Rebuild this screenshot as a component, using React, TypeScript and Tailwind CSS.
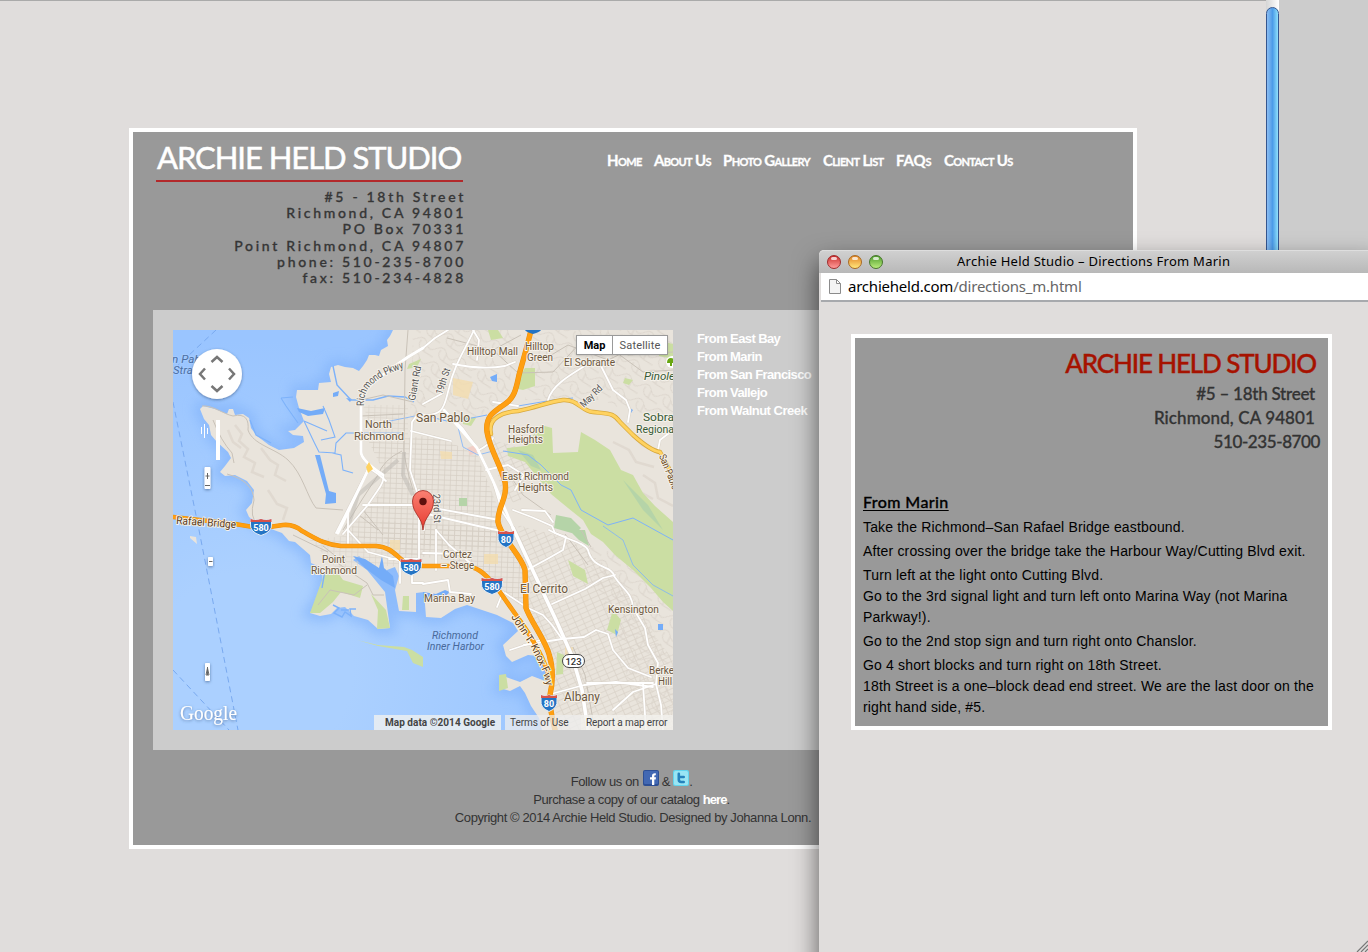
import React from "react";

type LabelProps = {
  x: number;
  y: number;
  w: number;
  children: string;
  size?: number;
  fill?: string;
  italic?: boolean;
  rotate?: number;
  halo?: string;
};

/* Map caption with a light halo, stretched to a fixed width. */
function Label({ x, y, w, children, size = 11, fill = "#6b5740", italic, rotate = 0, halo = "#f5f1ea" }: LabelProps) {
  return (
    <text
      x={x}
      y={y}
      textLength={w}
      lengthAdjust="spacingAndGlyphs"
      fontSize={size}
      fill={fill}
      stroke={halo}
      strokeWidth={2}
      strokeLinejoin="round"
      paintOrder="stroke"
      fontStyle={italic ? "italic" : "normal"}
      transform={`rotate(${rotate} ${x} ${y})`}
    >
      {children}
    </text>
  );
}

function Shield({ x, y, n }: { x: number; y: number; n: string }) {
  const w = n.length > 2 ? 10.5 : 8;
  return (
    <g transform={`translate(${x} ${y})`}>
      <path
        d={`M${-w} -8 Q${-w / 2} -6 0 -8 Q${w / 2} -6 ${w} -8 V-3 Q${w + 1} 5 0 8.5 Q${-w - 1} 5 ${-w} -3Z`}
        fill="#2474c4"
        stroke="#e6edf5"
        strokeWidth="1"
      />
      <path d={`M${-w} -8 Q${-w / 2} -6 0 -8 Q${w / 2} -6 ${w} -8 V-5 H${-w}Z`} fill="#d9534a" />
      <text y="3.5" textAnchor="middle" fontSize="9" fontWeight="700" fill="#fff">
        {n}
      </text>
    </g>
  );
}

const LAND =
  "M220 0 L217 6 L214 10 L215 16 L208 20 L206 26 L202 25 L196 25 L194 30 L190 36 L186 41 L180 38 L172 37 L165 35 L158 37 L156 44 L158 52 L146 53 L145 60 L124 60 L123 67 L126 78 L131 91 L122 100 L115 101 L120 105 L130 106 L131 112 L121 118 L106 120 L96 115 L84 106 L78 98 L76 88 L70 84 L62 85 L60 79 L56 79 L54 84 L42 79 L30 76 L27 79 L31 89 L36 95 L38 105 L44 112 L55 122 L58 128 L52 136 L47 142 L52 146 L62 145 L74 151 L81 160 L79 173 L73 180 L76 187 L90 196 L109 203 L116 211 L122 212 L137 225 L138 233 L149 238 L150 255 L146 270 L137 283 L147 286 L158 284 L164 278 L172 277 L181 286 L195 290 L205 299 L217 298 L212 262 L194 240 L180 230 L186 226 L202 240 L213 248 L214 240 L222 237 L226 246 L222 260 L226 281 L243 282 L243 263 L251 262 L253 287 L268 288 L282 279 L294 275 L306 279 L324 285 L340 293 L345 301 L330 315 L333 326 L339 332 L355 325 L366 326 L373 342 L375 352 L359 346 L347 352 L333 347 L327 358 L337 361 L347 356 L352 363 L358 376 L366 388 L369 400 L500 400 L500 0 Z";

const I80 =
  "M358 0 C354 18 350 30 346 45 C343 60 341 68 332 74 C320 82 312 87 314 102 C317 120 327 133 332 152 C335 168 324 178 325 192 C328 208 349 226 352 240 L353 278 C357 290 372 310 376 324 C381 340 380 352 377 365 Q376 376 382 400";
const I580 =
  "M0 187 L62 194 L86 198 Q98 197 110 195 Q121 194 129 201 C142 208 152 215 168 216 H203 C218 217 222 225 234 234 L250 236 L290 236 C304 236 311 243 322 255 L343 285 C354 300 371 326 377 350";
const SR123 = "M340 198 L361 243 L383 290 L399 326 L409 360 L415 400";
const DAM_RD =
  "M318 104 C314 88 330 82 345 81 C365 77 375 72 390 70 C405 69 408 81 420 82 C438 84 440 83 447 92 L460 105 Q478 121 487 122 L500 146";

const WHITE_ROADS = [
  "M250 18 L235 27 Q189 58 188 68 V122 Q188 130 210 145 Q212 150 205 160 L194 176 L170 204",
  "M213 151 L205 144 L196 138 L163 203",
  "M301 0 C292 20 281 35 276 58 C271 76 272 88 245 84 L239 92 L237 140 L245 165 L251 200",
  "M271 80 L290 99 L304 118 L320 151 L329 181 L340 198",
  "M238 101 L278 111",
  "M246 160 V240",
  "M190 175 H245 L326 190",
  "M250 18 L262 8 L275 0",
  "M250 74 L270 63",
  "M280 34 Q310 40 332 36 L342 32",
  "M300 0 L306 10 L304 30",
  "M415 34 C397 45 379 55 375 70",
  "M428 36 L440 60 L453 70 L457 80 L455 92",
  "M500 100 L487 110 L485 120",
  "M250 183 L305 196 L328 201",
  "M320 72 L345 76 M306 120 Q316 115 320 108",
  "M340 180 Q360 187 379 196 L382 203 L393 207 L390 220 L376 228 L354 240",
  "M379 274 L412 259 L430 248 L442 245",
  "M376 200 C394 210 411 212 415 220 C420 240 439 235 441 246 C450 260 459 262 460 278 L472 298 L475 315 L485 333 L483 354",
  "M351 315 L389 309 L411 307 L423 300 L435 304 L440 320 L455 338 L478 347",
  "M250 223 L292 224",
  "M263 200 L276 215 L302 237",
  "M216 229 H245 M263 200 V240 M227 230 V253 M239 230 V253 H250",
  "M332 263 L355 278 L370 285 L379 295 L389 309",
  "M414 353 H480 M378 364 L411 355 L443 352 L480 357",
  "M483 354 L488 375 L490 400 M483 354 L460 362 L440 380 M470 354 L473 400",
  "M313 140 L335 135 L351 145 L342 160 M349 180 L372 181 L380 192",
  "M175 200 L195 222 L228 231 M175 180 V216",
  "M250 254 L275 250 L277 262 L298 264",
  "M324 277 L330 262 M337 320 L367 310",
];

const GREY_ROADS = [
  "M235 0 L232 40 L231 120 Q231 130 240 160",
  "M229 121 Q210 130 205 145 L190 168 L170 200",
  "M188 70 L210 65 L240 72 M188 86 L230 84",
  "M29 76 C40 75 50 84 60 86 C73 83 76 90 75 100 C80 115 102 118 115 130 C130 144 134 167 143 178 L170 180",
  "M40 90 Q48 111 59 123 L61 133 M54 144 Q80 151 81 170 Q76 188 85 194",
  "M120 205 L155 222 M150 216 L170 232",
  "M160 230 L194 253 L200 265 H211",
  "M145 275 L157 260 L181 265 L194 255",
  "M190 180 L210 205 M186 185 L205 200",
  "M274 8 L320 20 L348 5 M320 20 L345 43 L380 42 L410 10",
  "M430 10 L455 25 L500 22 M440 20 L470 42 L500 40",
  "M370 30 L395 15 L435 30 L460 18",
  "M408 200 L418 217 M392 204 L415 235",
  "M400 317 L412 345 L420 390",
  "M340 150 L350 165 L378 185",
];

function DirectionsMap() {
  return (
    <div className="relative h-[400px] w-[500px] overflow-hidden bg-[#a9cfff]">
      <svg
        width="500"
        height="400"
        viewBox="0 0 500 400"
        className="block font-['Roboto',sans-serif]"
        fill="none"
      >
        <defs>
          <radialGradient id="bay" gradientUnits="userSpaceOnUse" cx="80" cy="340" r="330">
            <stop offset="0.3" stopColor="#abd0ff" />
            <stop offset="1" stopColor="#9ac5ff" />
          </radialGradient>
          <pattern id="blocks" width="6" height="5" patternUnits="userSpaceOnUse" patternTransform="rotate(2)">
            <path d="M0 .5H6M.5 0V5" stroke="#d6cfc4" strokeWidth=".7" />
          </pattern>
          <pattern id="slant" width="8" height="5" patternUnits="userSpaceOnUse" patternTransform="rotate(-24)">
            <path d="M0 .5H8M.5 0V5" stroke="#d8d1c7" strokeWidth=".7" />
          </pattern>
          <pattern id="curvy" width="22" height="16" patternUnits="userSpaceOnUse" patternTransform="rotate(28)">
            <path d="M0 4Q6 -2 11 5T22 4M4 4Q2 12 11 13T22 14M11 5V13" stroke="#d8d1c8" strokeWidth=".8" />
          </pattern>
          <linearGradient id="pin" x1="0" y1="0" x2="0" y2="1">
            <stop offset="0" stopColor="#fb8072" />
            <stop offset="1" stopColor="#e63c30" />
          </linearGradient>
          <filter id="soft" x="-20%" y="-20%" width="140%" height="140%">
            <feGaussianBlur stdDeviation="6" />
          </filter>
          <filter id="drop" x="-30%" y="-30%" width="160%" height="160%">
            <feDropShadow dx="0" dy="1" stdDeviation="1.4" floodColor="#2b4a72" floodOpacity=".6" />
          </filter>
        </defs>

        <rect width="500" height="400" fill="url(#bay)" />
        <path d={LAND} fill="#82b3fa" stroke="#82b3fa" strokeWidth="12" filter="url(#soft)" opacity=".65" />
        <path d={LAND} fill="#e9e4dc" />
        <path d="M17 206l6 1 1 7-7-6zM10 82l6-3z" fill="#e9e4dc" />

        {/* built-up areas */}
        <path d="M196 112 L232 108 L262 105 L304 125 L330 190 L322 215 L300 220 L208 212 L172 205 L205 165 L212 145Z" fill="url(#blocks)" />
        <path d="M190 75 L235 75 V105 H200Z" fill="url(#blocks)" opacity=".7" />
        <path d="M206 190 L330 200 L350 240 L352 280 L318 250 L290 232 L215 222Z" fill="url(#blocks)" />
        <path d="M240 0 H342 L336 65 L310 84 L290 92 L268 60 L237 95Z" fill="url(#curvy)" />
        <path d="M360 0 H500 V85 L455 82 L430 70 L352 70Z" fill="url(#curvy)" />
        <path d="M345 195 L382 205 L412 218 L440 245 L462 270 L478 300 L500 330 V400 H384 L380 330 L356 285Z" fill="url(#slant)" />
        <path d="M410 215 L450 225 L500 270 V400 H470 L440 300Z" fill="url(#curvy)" />
        <path d="M320 110 L370 125 L345 175 L328 165Z" fill="url(#slant)" />
        <path d="M137 210 L180 205 L250 210 V236 L195 236 L165 240Z" fill="url(#blocks)" opacity=".7" />

        {/* hills */}
        <g stroke="#ddd6cd" strokeWidth="2.500" opacity=".8">
          <path d="M62 95l7 9-3 7 9 8-4 8 11 6-3 9 12 5M55 100l5 12 8 6M88 118l9 12 8 5-3 10 11 6M95 160l9 14 10 4-4 12" />
          <path d="M420 120l14 10 8 12 14 5 6 12 18 10M440 112l16 8 7 12 18 5M470 145l12 8 3 15 15 8M455 100l14 15 20 10" />
        </g>

        {/* parks */}
        <g fill="#cbdea3">
          <path d="M334 118 L352 116 L368 95 L379 98 L380 123 L405 122 L408 102 L422 110 L437 120 L448 140 L460 145 L470 163 L482 176 L500 192 V281 L490 272 L478 258 L460 240 L442 225 L430 212 L418 204 L410 190 L395 178 L378 164 L365 148 L352 132 L335 126Z" />
          <path d="M153 239 L163 240 L170 250 L190 256 L187 268 L168 262 L160 272 L147 283 L137 283Z" />
          <path d="M198 264 L213 280 L217 298 L204 299 L205 280ZM230 266h6v14h-7z" />
          <path d="M184 310 L205 315 L231 317 L239 320 L250 327 V337 L240 333 L234 321 L205 316Z" />
          <path d="M326 345 L333 344 L335 358 L326 361Z" />
          <path d="M352 38h10v18l-12 4-10-2z M236 34l12-5-4 8-10 2z" />
          <path d="M384 322 L391 325 L390 344 L383 345ZM395 230 L412 240 L415 254 L400 246ZM440 280 L448 290 L444 305 L434 300Z" />
          <path d="M315 0 L325 0 L330 8 L318 10ZM289 86l14 2-5 8-8-2zM484 10l16 4v15l-14-3zM452 48l8 2-4 5-6-2z" />
        </g>
        <g fill="#b5d4a8">
          <path d="M383 185 L398 188 L408 198 L402 204 L381 198ZM396 200 L412 200 L416 216 L406 210Z" />
          <path d="M345 120 L360 125 L368 140 L358 136ZM450 150 L475 175 L490 200 L470 180ZM286 168h8v8h-8z" />
        </g>
        <g fill="#f2dcae" opacity=".8">
          <path d="M280 48l20 4-5 17-15-4zM267 121l12 1v7h-11zM311 224h14v10h-14zM217 210h10v10h-10zM392 317h8v8h-8z" />
        </g>
        <path d="M294 118l8-3 2 8-7 2z" fill="#f1cfc7" />

        {/* inland water */}
        <g fill="#74acf8">
          <path d="M142 125 L147 125 L156 161 L163 163 V173 L152 174 L153 164Z" />
          <path d="M160 63l6-2-1 5-5 1zM173 68l6 1-2 3zM317 47l7-3v8l-5-1zM485 294l5 0v6h-5zM457 78l3 2-2 3zM442 299l3 3-2 5z" />
          <path d="M124 78 L138 81 L152 78 L150 84 L135 86 L126 82ZM180 226 L192 229 L206 238 L209 226 L211 238 L220 246 L222 258 L208 250 L192 238Z" />
          <path d="M250 262 L263 264 L272 260 L277 262 L268 270 L250 268Z" />
        </g>
        <g stroke="#7db2fa" strokeWidth="1.4">
          <path d="M160 36 L164 55 L178 70 L200 70 L215 66 L232 67 L241 72" />
          <path d="M131 91 L141 112 L146 122 L162 123 L163 113 L173 103 L188 103M131 91 L154 101M150 76 L156 90 L162 107 L148 110 M159 123 L168 125 L170 140 L180 143M108 68l12-1m-12 1l5 8 12 17M77 90l6 15 15 8" strokeWidth="1.1" />
          <path d="M160 275l6 3-5 5 8 4 3-5 6 4-1-7 6 0M152 240 L149 258M168 280h8" />
          <path d="M245 84 L278 92 L314 85M330 121 L355 125 L368 135 L388 155 L398 160 L408 180 L435 195 L460 188 L500 210M345 76 L380 70 L400 68" strokeWidth="1" />
          <path d="M430 196 L450 210 L460 235 L480 255 L500 266M285 97l5 20 15 8 15-4M190 103h40M197 95l45-9" strokeWidth=".8" />
        </g>

        {/* streets */}
        <g stroke="#c9c2b8" strokeWidth="1" strokeLinejoin="round">
          {GREY_ROADS.map((d) => (
            <path key={d} d={d} />
          ))}
        </g>
        <path d="M225 130 L185 165 L174 200 M231 122 L230 145 L240 165" stroke="#bbb7b1" strokeWidth="4" opacity=".5" />
        <g strokeLinejoin="round" strokeLinecap="round">
          <g stroke="#dad3ca" strokeWidth="2.8">
            {WHITE_ROADS.map((d) => (
              <path key={d} d={d} />
            ))}
            <path d={SR123} strokeWidth="5" />
          </g>
          <g stroke="#fff" strokeWidth="1.8">
            {WHITE_ROADS.map((d) => (
              <path key={d} d={d} />
            ))}
            <path d={SR123} strokeWidth="3.6" />
            <path d="M250 18 L235 27 Q189 58 188 68 V122 Q188 130 210 145M196 138 L165 203M271 80 L304 118 L320 151 L340 198" strokeWidth="2.8" />
          </g>
          <path d={DAM_RD} stroke="#d8a83b" strokeWidth="4.4" />
          <path d={DAM_RD} stroke="#ffd25f" strokeWidth="3" />
          <path d={I580} stroke="#e98f0c" strokeWidth="4.6" />
          <path d={I580} stroke="#ff9f12" strokeWidth="3.6" />
          <path d={I80} stroke="#e98f0c" strokeWidth="5.4" />
          <path d={I80} stroke="#ff9f12" strokeWidth="4.4" />
        </g>
        <path d="M196 132l4 7-5 4-2-6z" fill="#ffd25f" />

        {/* ferry lines */}
        <path d="M43 0 L0 40M0 72 L26 200 L65 400M0 340 L56 400" stroke="#79a9ef" strokeWidth="1" strokeDasharray="6 4" />

        {/* captions */}
        <Label x={-1} y={33} w={38} italic fill="#4c6fa3" halo="#a4cbff">n Pablo</Label>
        <Label x={0} y={44} w={26} italic fill="#4c6fa3" halo="#a4cbff">Strait</Label>
        <Label x={294} y={25} w={51}>Hilltop Mall</Label>
        <Label x={352} y={20} w={29}>Hilltop</Label>
        <Label x={354} y={31} w={26}>Green</Label>
        <Label x={391} y={36} w={51}>El Sobrante</Label>
        <Label x={471} y={50} w={31} italic fill="#375a35">Pinole</Label>
        <Label x={470} y={91} w={31} fill="#375a35">Sobra</Label>
        <Label x={463} y={103} w={38} fill="#375a35">Regiona</Label>
        <Label x={243} y={92} w={54} size={12.5}>San Pablo</Label>
        <Label x={192} y={98} w={27}>North</Label>
        <Label x={181} y={110} w={50}>Richmond</Label>
        <Label x={335} y={103} w={36}>Hasford</Label>
        <Label x={335} y={113} w={35}>Heights</Label>
        <Label x={329} y={150} w={67}>East Richmond</Label>
        <Label x={345} y={161} w={35}>Heights</Label>
        <Label x={149} y={233} w={23}>Point</Label>
        <Label x={138} y={244} w={46}>Richmond</Label>
        <Label x={270} y={228} w={29}>Cortez</Label>
        <Label x={268} y={239} w={33}>– Stege</Label>
        <Label x={251} y={272} w={51}>Marina Bay</Label>
        <Label x={347} y={263} w={48} size={12.5}>El Cerrito</Label>
        <Label x={435} y={283} w={51}>Kensington</Label>
        <Label x={391} y={371} w={36} size={12.5}>Albany</Label>
        <Label x={476} y={344} w={25}>Berke</Label>
        <Label x={485} y={355} w={14}>Hill</Label>
        <text fontSize="10.5" fontStyle="italic" fill="#48699a">
          <tspan x="259" y="309" textLength="46">Richmond</tspan>
          <tspan x="254" y="320" textLength="57">Inner Harbor</tspan>
        </text>
        <Label x={3} y={194} w={60} fill="#5b3b18" rotate={4}>Rafael Bridge</Label>
        <path id="pkwy" d="M191 76 Q190 61 202 52 Q213 43 232 38" />
        <g fontSize="10.5" fill="#555" stroke="#f5f1ea" strokeWidth="2" paintOrder="stroke">
          <text><textPath href="#pkwy" textLength="60" lengthAdjust="spacingAndGlyphs">Richmond Pkwy</textPath></text>
        </g>
        <Label x={242} y={71} w={35} size={10} fill="#555" rotate={-80}>Giant Rd</Label>
        <Label x={269} y={65} w={27} size={10} fill="#555" rotate={-72}>19th St</Label>
        <Label x={411} y={78} w={27} size={10} fill="#555" rotate={-45}>May Rd</Label>
        <Label x={260} y={164} w={29} size={10} fill="#555" rotate={88}>23rd St</Label>
        <Label x={486} y={126} w={37} size={10} fill="#6b4a20" rotate={68}>San Pablo</Label>
        <path id="knox" d="M338 287 L358 317 L370 342 L375 362" />
        <g fontSize="10.5" fill="#5b3b18" stroke="#fff3de" strokeWidth="2" paintOrder="stroke">
          <text><textPath href="#knox" textLength="78" lengthAdjust="spacingAndGlyphs">John T. Knox Fwy</textPath></text>
        </g>

        <Shield x={88} y={197} n="580" />
        <Shield x={238} y={237} n="580" />
        <Shield x={319} y={256} n="580" />
        <Shield x={333} y={209} n="80" />
        <Shield x={376} y={373} n="80" />
        <path d="M352 0h16q-1 2-8 4-7-2-8-4z" fill="#2474c4" />
        <g>
          <rect x="389.500" y="324.500" width="22" height="13" rx="6.500" fill="#fff" stroke="#444" />
          <text x="400.500" y="334.500" textAnchor="middle" fontSize="9.500" fontWeight="500" fill="#333">123</text>
        </g>
        <circle cx="499" cy="32" r="6" fill="#fff" />
        <path d="M494 33q0-5 4-5t4 5h-3v3h-2v-3z" fill="#68a611" />

        {/* pan and zoom controls */}
        <circle cx="44" cy="44" r="25" fill="#fff" filter="url(#drop)" />
        <g stroke="#777" strokeWidth="2.500">
          <path d="M38.500 32l5.500-5 5.500 5M38.500 56l5.500 5 5.500-5M32 38.500l-5 5.500 5 5.500M56 38.500l5 5.500-5 5.500" />
        </g>
        <path d="M43 90h4v40h-4z" fill="#fff" />
        <path d="M28.500 97v7M31.500 94v14M34.500 98v6" stroke="#fff" />
        <path d="M32 137.500h5v21h-5zM35.500 227.500h4v8h-4zM32.500 333.500h4v17h-4z" fill="#fff" stroke="#fff" filter="url(#drop)" />
        <path d="M32 155.500h5M32.500 146h4M34.500 143v6M36 231.500h3.500M34.500 337v8M33 345l1.500-7 1.500 7z" stroke="#666" />

        {/* marker */}
        <path d="M250 200 C249 186 239.500 184 239.500 171 A10.500 10.500 0 0 1 260.500 171 C260.500 184 251 186 250 200Z" fill="url(#pin)" stroke="#a1281f" strokeWidth=".8" />
        <circle cx="250" cy="171.500" r="3.700" fill="#5d100d" />

        <text x="7" y="390" fontSize="21" textLength="57" lengthAdjust="spacingAndGlyphs" fill="#fff" filter="url(#drop)" className="font-['Liberation_Serif',serif]">
          Google
        </text>
      </svg>

      <div className="absolute right-[5px] top-[5px] flex h-5 border border-[#9a9a9a] bg-white font-['Roboto',sans-serif] text-[11px] leading-[19px] shadow-sm">
        <span className="w-[35px] text-center font-bold text-black">Map</span>
        <span className="w-[55px] border-l border-[#9a9a9a] text-center tracking-[0.15px] text-[#555]">Satellite</span>
      </div>
      <div className="absolute bottom-0 right-0 flex h-[15px] font-['Roboto',sans-serif] text-[10px] leading-[15px] text-[#444]">
        <span className="w-[127px] bg-[#e8edf2]/90 pl-[11px] font-bold tracking-[0.03px]">Map data ©2014 Google</span>
        <span className="ml-1 w-[76px] bg-[#eeeeee]/75 pl-[5px] tracking-[-0.05px]">Terms of Use</span>
        <span className="w-[92px] bg-[#f3f1ee]/80 pl-[5px] tracking-[-0.12px]">Report a map error</span>
      </div>
    </div>
  );
}

function FacebookIcon() {
  return (
    <svg width="16" height="16" viewBox="0 0 16 16" className="block">
      <rect width="16" height="16" rx="2" fill="#2d4f95" />
      <rect x="1" y="1" width="14" height="13" rx="1" fill="#4268b3" />
      <path d="M9 15V9.500H7V7.300h2V6c0-2 1.200-3 3.800-2.700v2C11.500 5.200 11.300 5.500 11.300 6.300v1H13l-.3 2.200h-1.400V15z" fill="#fff" />
    </svg>
  );
}

function TwitterIcon() {
  return (
    <svg width="16" height="16" viewBox="0 0 16 16" className="block">
      <rect width="16" height="16" rx="2" fill="#62d5ee" />
      <rect x="1" y="1" width="14" height="14" rx="1.500" fill="#98e5f4" />
      <path d="M5.800 3.800v5.700q0 2.500 2.500 2.500h2.400M6 7h4.700" stroke="#2583bd" strokeWidth="2.600" strokeLinecap="round" fill="none" />
    </svg>
  );
}

function TrafficLight({ className }: { className: string }) {
  return (
    <span className={"flex h-[14px] w-[14px] justify-center rounded-full border pt-px " + className}>
      <span className="h-[3px] w-[6px] rounded-full bg-white/75" />
    </span>
  );
}

const NAV = [
  { label: "Home", cls: "w-[47px]" },
  { label: "About Us", cls: "w-[69px]" },
  { label: "Photo Gallery", cls: "w-[100px]" },
  { label: "Client List", cls: "w-[73px]" },
  { label: "FAQs", cls: "w-[48px] tracking-[-0.1px]" },
  { label: "Contact Us", cls: "w-[80px]" },
];

function StudioPage() {
  return (
    <div className="flex h-[952px] w-[1266px] items-start bg-[#e0dddc] pl-[129px] pt-[127px]">
      <div className="h-[721px] w-[1008px] border-4 border-white bg-[#999999]">
        <header className="flex h-[178px] pl-[23px]">
          <div className="w-[308px]">
            <h1 className="mt-[5px] h-[43px] whitespace-nowrap pl-px font-['Lato',sans-serif] text-[31px] leading-[40px] tracking-[-1.05px] text-white [-webkit-text-stroke:0.5px_white]">
              ARCHIE HELD STUDIO
            </h1>
            <div className="h-[2px] w-[307px] bg-[#b2292b]" />
            <address className="-mr-[2px] mt-[7px] whitespace-nowrap text-right font-['Lato',sans-serif] text-[14px] font-medium not-italic leading-[16.2px] tracking-[2.7px] text-[#363636] [-webkit-text-stroke:0.3px_#363636]">
              <div>#5 - 18th Street</div>
              <div>Richmond, CA 94801</div>
              <div>PO Box 70331</div>
              <div>Point Richmond, CA 94807</div>
              <div>phone: 510-235-8700</div>
              <div>fax: 510-234-4828</div>
            </address>
          </div>
          <nav className="ml-[143px] flex pt-[18px] font-['Lato',sans-serif] text-[15px] font-bold leading-[20px] tracking-[-0.65px] text-white [-webkit-text-stroke:0.3px_white] [font-variant:small-caps]">
            {NAV.map((n) => (
              <a key={n.label} className={"whitespace-nowrap " + n.cls}>
                {n.label}
              </a>
            ))}
          </nav>
        </header>
        <main className="mx-5 flex h-[440px] bg-[#cccccc] p-5">
          <DirectionsMap />
          <ul className="ml-6 font-['Liberation_Sans',sans-serif] text-[13px] font-bold leading-[18px] tracking-[-0.6px] text-white">
            <li>From East Bay</li>
            <li>From Marin</li>
            <li>From San Francisco</li>
            <li>From Vallejo</li>
            <li className="tracking-[-0.5px]">From Walnut Creek</li>
          </ul>
        </main>
        <footer className="whitespace-nowrap pt-5 text-center font-['Liberation_Sans',sans-serif] text-[13px] leading-[18px] tracking-[-0.4px] text-[#333333]">
          <div className="flex h-[21px] items-end justify-center pr-[3px]">
            <span className="pr-[4px]">Follow us on</span>
            <span className="self-start"><FacebookIcon /></span>
            <span className="px-[3px]">&amp;</span>
            <span className="self-start"><TwitterIcon /></span>
            <span>.</span>
          </div>
          <div className="pr-[3px] tracking-[-0.43px]">
            Purchase a copy of our catalog <b className="tracking-[-0.9px] text-white">here</b>.
          </div>
          <div>Copyright © 2014 Archie Held Studio. Designed by Johanna Lonn.</div>
        </footer>
      </div>
    </div>
  );
}

function DirectionsWindow() {
  return (
    <section className="absolute left-[819px] top-[250px] flex h-[720px] w-[560px] flex-col rounded-tl-[5px] bg-[#e0dddc] shadow-[0_12px_26px_rgba(0,0,0,0.6)]">
      <div className="flex h-[23px] shrink-0 items-center gap-[7px] rounded-tl-[5px] border-t border-[#dedede] bg-gradient-to-b from-[#d0d0d0] to-[#b8b8b8] pl-2">
        <TrafficLight className="border-[#a02a2a] bg-gradient-to-b from-[#c9252b] to-[#ff9a9a]" />
        <TrafficLight className="border-[#a96a22] bg-gradient-to-b from-[#e08220] to-[#ffe77a]" />
        <TrafficLight className="border-[#47762c] bg-gradient-to-b from-[#4f9d2c] to-[#b9ec7c]" />
        <h2 className="mb-[2px] ml-[67px] whitespace-nowrap font-['Noto_Sans',sans-serif] text-[13px] leading-[20px] tracking-[0.27px] text-black">
          Archie Held Studio – Directions From Marin
        </h2>
      </div>
      <div className="ml-[2px] flex h-[29px] shrink-0 items-center border-b-2 border-[#a7a9ad] bg-white pl-2">
        <svg width="12" height="15" viewBox="0 0 12 15" fill="#f4f4f4" stroke="#8b8b8b">
          <path d="M.5 .5h7l4 4v10H.5zM7.500 .5v4h4" />
        </svg>
        <span className="ml-[7px] whitespace-nowrap font-['Noto_Sans',sans-serif] text-[15px] tracking-[-0.22px] text-[#666]">
          <span className="text-black">archieheld.com</span>/directions_m.html
        </span>
      </div>
      <div className="pl-8 pt-8">
        <div className="h-[396px] w-[481px] border-4 border-white bg-[#999999]">
          <div className="flex h-[150px] flex-col items-end whitespace-nowrap pr-[13px] pt-[8px] font-['Lato',sans-serif] text-[17px] font-medium leading-[24px] text-[#333333]">
            <h1 className="-mr-px h-[36px] text-[26px] leading-[35px] tracking-[-1.15px] text-[#a61200] [-webkit-text-stroke:0.4px_#a61200]">ARCHIE HELD STUDIO</h1>
            <div className="tracking-[-0.25px] [-webkit-text-stroke:0.3px_#333333]">#5 – 18th Street</div>
            <div className="tracking-[0.1px] [-webkit-text-stroke:0.3px_#333333]">Richmond, CA 94801</div>
            <div className="-mr-[5px] tracking-[-0.4px] [-webkit-text-stroke:0.3px_#333333]">510-235-8700</div>
          </div>
          <div className="pl-2 font-['Liberation_Sans',sans-serif] text-[14px] leading-[21px] tracking-[0.16px] text-black">
            <h2 className="mb-[3px] h-[26px] font-['Lato',sans-serif] text-[16px] font-medium leading-[27px] tracking-[0.4px] underline underline-offset-2 [-webkit-text-stroke:0.3px_black]">From Marin</h2>
            <p className="mb-[3px]">Take the Richmond–San Rafael Bridge eastbound.</p>
            <p className="mb-[3px] whitespace-nowrap">After crossing over the bridge take the Harbour Way/Cutting Blvd exit.</p>
            <p className="mb-[3px] whitespace-nowrap">
              Turn left at the light onto Cutting Blvd.
              <br />
              Go to the 3rd signal light and turn left onto Marina Way (not Marina
              <br />
              Parkway!).
            </p>
            <p className="mb-[3px]">Go to the 2nd stop sign and turn right onto Chanslor.</p>
            <p className="whitespace-nowrap">
              Go 4 short blocks and turn right on 18th Street.
              <br />
              18th Street is a one–block dead end street. We are the last door on the
              <br />
              right hand side, #5.
            </p>
          </div>
        </div>
      </div>
    </section>
  );
}

export default function App() {
  return (
    <div className="relative h-[952px] w-[1368px] overflow-hidden bg-[#cccccc]">
      <div className="flex">
        <div className="border-t border-[#aaaaaa]">
          <StudioPage />
        </div>
        <div className="flex h-[952px] w-[13px] flex-col bg-gradient-to-r from-[#d5d5d5] to-white pt-[7px]">
          <div className="flex-1 rounded-t-full border border-[#34558f] bg-gradient-to-r from-[#8bbdf2] via-[#4c9be8] to-[#8fe0fb]" />
        </div>
      </div>
      <DirectionsWindow />
      <svg width="12" height="12" viewBox="0 0 12 12" className="absolute bottom-0 right-0" stroke="#777" strokeWidth="1.200">
        <path d="M1 12L12 1M5 12L12 5M9 12L12 9" />
      </svg>
    </div>
  );
}
